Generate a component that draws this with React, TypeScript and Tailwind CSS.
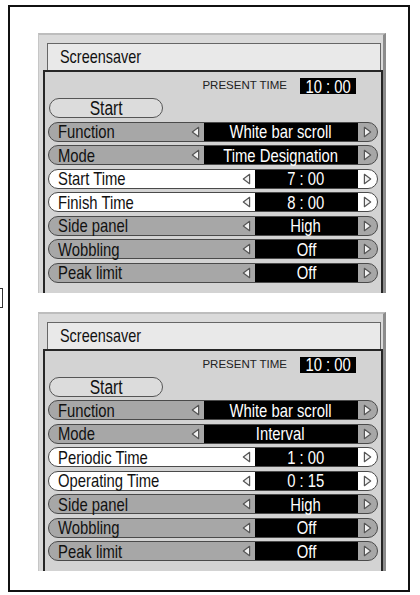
import React from 'react';

const sans = "font-['Liberation_Sans',Arial,sans-serif]";

interface RowProps {
  label: string;
  value: string;
  white?: boolean;
  wide?: boolean;
}

// condensed look: Arial-metric text squeezed horizontally
function Narrow({ children, center }: { children: React.ReactNode; center?: boolean }) {
  return (
    <span
      className={`inline-block whitespace-nowrap scale-x-[0.78] ${center ? 'origin-center' : 'origin-left'} ${sans}`}
    >
      {children}
    </span>
  );
}

function LeftArrow() {
  return (
    <svg width="9" height="12" viewBox="0 0 9 12" className="mr-[4px] shrink-0 self-center">
      <path d="M7.6 1.3 L1.3 6 L7.6 10.7 Z" fill="#f2f2f2" stroke="#555" strokeWidth="1.2" strokeLinejoin="round" />
    </svg>
  );
}

function RightArrow() {
  return (
    <svg width="9" height="12" viewBox="0 0 9 12">
      <path d="M1.4 1.3 L7.7 6 L1.4 10.7 Z" fill="#f2f2f2" stroke="#555" strokeWidth="1.2" strokeLinejoin="round" />
    </svg>
  );
}

function Row({ label, value, white, wide }: RowProps) {
  return (
    <div
      className={`flex h-[20px] items-stretch rounded-full border-[1.5px] border-[#4a4a4a] ${
        white ? 'bg-white' : 'bg-[#a7a7a7]'
      }`}
    >
      <span className="flex flex-1 items-center pl-[9px] text-[19px] leading-[19px] text-[#111]">
        <Narrow>{label}</Narrow>
      </span>
      <LeftArrow />
      <div
        className={`${wide ? 'w-[154px]' : 'w-[103px]'} flex shrink-0 items-center justify-center bg-black text-[19px] leading-[19px] text-white`}
      >
        <Narrow center>{value}</Narrow>
      </div>
      <div className="flex w-[19.5px] shrink-0 items-center justify-center">
        <RightArrow />
      </div>
    </div>
  );
}

function Panel({ rows }: { rows: RowProps[] }) {
  return (
    <div className="w-[348px] border-t-2 border-l border-r-[3px] border-t-[#bdbdbd] border-l-[#c6c6c6] border-r-[#8c8c8c] bg-[#dadada]">
      {/* title tab */}
      <div className="ml-[8px] mr-[2px] mt-[8px] flex h-[27px] items-center border-x-[1.5px] border-t-[1.5px] border-[#666] bg-[#e9e9e9] pl-[12px]">
        <span className="text-[18.5px] leading-none text-[#111]">
          <Narrow>Screensaver</Narrow>
        </span>
      </div>

      {/* body */}
      <div className="ml-[4px] border-x-2 border-t-2 border-[#262626] bg-[#d3d3d3] pb-[10px]">
        <div className="mt-[6px] flex h-[16px] items-center justify-end gap-[13px] pr-[25px]">
          <span className={`text-[11.5px] leading-none text-[#222] ${sans}`}>PRESENT TIME</span>
          <div className="flex h-[16px] w-[56px] items-center justify-center bg-black text-[19px] leading-none text-white">
            <Narrow center>10 : 00</Narrow>
          </div>
        </div>

        <div className="ml-[4px] mt-[4px] flex h-[20px] w-[114px] items-center justify-center rounded-full border-[1.5px] border-[#555] bg-[#dcdcdc] text-[20px] leading-none text-[#111]">
          <Narrow center>Start</Narrow>
        </div>

        <div className="mt-[3.5px] flex flex-col gap-[3.5px] px-[3px]">
          {rows.map(r => (
            <Row key={r.label} {...r} />
          ))}
        </div>
      </div>
    </div>
  );
}

const designationRows: RowProps[] = [
  { label: 'Function', value: 'White bar scroll', wide: true },
  { label: 'Mode', value: 'Time Designation', wide: true },
  { label: 'Start Time', value: '7 : 00', white: true },
  { label: 'Finish Time', value: '8 : 00', white: true },
  { label: 'Side  panel', value: 'High' },
  { label: 'Wobbling', value: 'Off' },
  { label: 'Peak limit', value: 'Off' },
];

const intervalRows: RowProps[] = [
  { label: 'Function', value: 'White bar scroll', wide: true },
  { label: 'Mode', value: 'Interval', wide: true },
  { label: 'Periodic Time', value: '1 : 00', white: true },
  { label: 'Operating Time', value: '0 : 15', white: true },
  { label: 'Side  panel', value: 'High' },
  { label: 'Wobbling', value: 'Off' },
  { label: 'Peak limit', value: 'Off' },
];

export default function App() {
  return (
    <div className="relative h-[595px] w-[420px] overflow-hidden bg-white pl-[8px] pt-[5px]">
      <div className="flex h-[587px] w-[402px] flex-col gap-[19px] border-2 border-[#111] pl-[28px] pt-[26px]">
        <Panel rows={designationRows} />
        <Panel rows={intervalRows} />
      </div>
      {/* stray bracket at left edge */}
      <div className="absolute left-[-5px] top-[288px] h-[20px] w-[8px] border-[1.5px] border-[#333]" />
    </div>
  );
}
